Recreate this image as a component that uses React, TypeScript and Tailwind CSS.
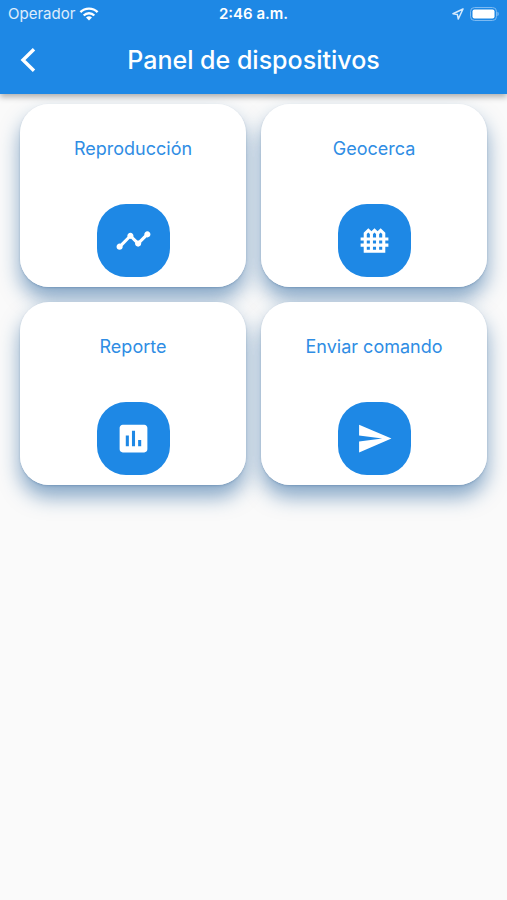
import type { IconType } from "react-icons";
import { MdFence, MdInsertChart, MdSend, MdTimeline } from "react-icons/md";

type Action = { label: string; icon: IconType };

const actions: Action[] = [
  { label: "Reproducción", icon: MdTimeline },
  { label: "Geocerca", icon: MdFence },
  { label: "Reporte", icon: MdInsertChart },
  { label: "Enviar comando", icon: MdSend },
];

function StatusBar() {
  return (
    <div className="grid h-7 grid-cols-3 items-center px-2 text-[15px] leading-5">
      <div className="flex items-center gap-1 text-white/85">
        <span>Operador</span>
        <svg viewBox="0 0 20 14" className="h-[14px] w-5" fill="none" stroke="#fff" strokeWidth="2.4" aria-hidden="true">
          <path d="M1.4 5.2a12.2 12.2 0 0 1 17.2 0" />
          <path d="M4.7 8.5a7.5 7.5 0 0 1 10.6 0" />
          <path d="M10 13.6 7 10.6a4.3 4.3 0 0 1 6 0z" fill="#fff" stroke="none" />
        </svg>
      </div>
      <span className="text-center font-semibold">2:46 a.m.</span>
      <div className="flex items-center justify-end gap-[6px]">
        <svg viewBox="0 0 12 12" className="h-3 w-3" fill="none" stroke="#d6eafc" strokeWidth="1.5" strokeLinejoin="round" aria-hidden="true">
          <path d="M11 1 1 5.8l4.4.8.9 4.4z" />
        </svg>
        <svg viewBox="0 0 29 14" className="h-[14px] w-[29px]" aria-hidden="true">
          <rect x="0.5" y="0.5" width="26" height="13" rx="4" fill="none" stroke="#7dbaf2" />
          <rect x="2.5" y="2.5" width="22" height="9" rx="2" fill="#fff" />
          <path d="M27.4 4.8c1.8.6 1.8 3.8 0 4.4z" fill="#7dbaf2" />
        </svg>
      </div>
    </div>
  );
}

function ActionCard({ label, icon: Icon }: Action) {
  return (
    <button
      type="button"
      className="relative flex flex-col items-center rounded-[29px] bg-white pt-[33px] pb-[10px] before:absolute before:inset-0 before:-z-10 before:rounded-[29px] before:shadow-[0_1px_2px_rgba(30,80,130,0.25),0_12px_20px_rgba(20,85,150,0.5)]"
    >
      <span className="text-lg leading-6 text-[#2f8de4]">{label}</span>
      <span className="mt-[43px] flex size-[73px] items-center justify-center rounded-[29px] bg-[#1e88e5] text-white">
        <Icon className="size-[37px]" aria-hidden="true" />
      </span>
    </button>
  );
}

export default function App() {
  return (
    <div className="min-h-screen bg-[#fafafa] font-['Inter','Liberation_Sans',sans-serif]">
      <header className="relative z-10 bg-[#1e88e5] text-white shadow-[0_3px_6px_rgba(0,0,0,0.3)]">
        <StatusBar />
        <div className="grid h-[66px] grid-cols-[56px_1fr_56px] items-center pb-[2px]">
          <button type="button" aria-label="Atrás" className="flex h-12 items-center pl-5">
            <svg viewBox="0 0 16 24" className="h-6 w-4" fill="none" stroke="currentColor" strokeWidth="3.4" aria-hidden="true">
              <path d="M14 1.2 3 12l11 10.8" />
            </svg>
          </button>
          <h1 className="text-center text-[25px] leading-8 font-medium">Panel de dispositivos</h1>
        </div>
      </header>
      <main className="isolate grid grid-cols-2 gap-[15px] px-5 pt-[10px] pb-8">
        {actions.map((action) => (
          <ActionCard key={action.label} {...action} />
        ))}
      </main>
    </div>
  );
}
